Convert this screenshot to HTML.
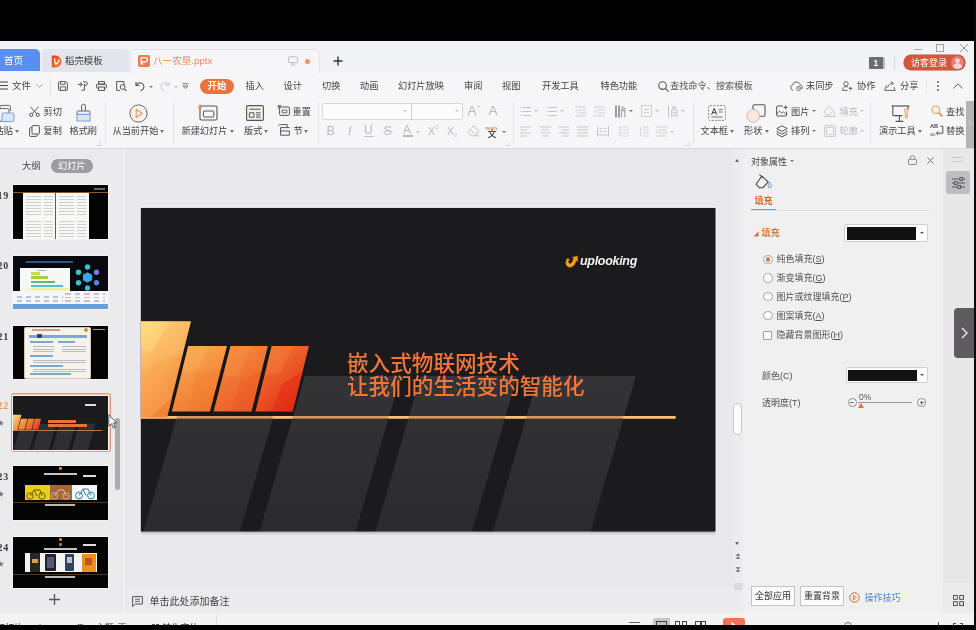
<!DOCTYPE html>
<html lang="zh-CN">
<head>
<meta charset="utf-8">
<title>WPS 演示</title>
<style>
*{box-sizing:border-box;margin:0;padding:0}
html,body{width:976px;height:630px;overflow:hidden;background:#000}
body{position:relative;font-family:"Liberation Sans","Noto Sans CJK SC",sans-serif;font-size:9.2px;color:#444}
.a{position:absolute}
.t{position:absolute;white-space:nowrap;line-height:12px;height:12px;filter:blur(.35px)}
.g{color:#b9b9bd}
svg{position:absolute;overflow:visible;filter:blur(.3px)}
.ar{position:absolute;width:0;height:0;border-left:2.5px solid transparent;border-right:2.5px solid transparent;border-top:3px solid #777}
.ar.g{border-top-color:#c4c4c8}
.sep{position:absolute;width:1px;background:#e2e2e6}
.num{font-family:"Liberation Serif","DejaVu Serif",serif;font-weight:bold;font-size:10px;color:#3a3a3a;letter-spacing:.8px}
.star{font-family:"DejaVu Sans",sans-serif;font-size:8.5px;color:#777}
.th{left:13px;width:95.300px;background:#040404;overflow:hidden;box-shadow:0 0 0 1px #f4f4f6}
.th svg{filter:none}
.lines{background:repeating-linear-gradient(0deg,#cfcfcb 0 .9px,transparent .9px 3.100px);-webkit-mask:linear-gradient(90deg,#000 0 55%,transparent 55% 66%,#000 66% 100%)}
.rad{width:9.5px;height:9.5px;border:1px solid #a4a4a8;border-radius:50%;background:#fcfcfc}
.rad i{position:absolute;left:1.500px;top:1.500px;width:4.500px;height:4.500px;border-radius:50%;background:#c4805c}
.opt{font-size:9px;color:#505050}
#tabbar{left:0;top:41px;width:976px;height:30.500px;background:#f2f3f7}
#menurow{left:0;top:71.500px;width:976px;height:25.500px;background:#f6f6f8}
#ribbon{left:0;top:97px;width:976px;height:51px;background:#f6f6f8}
#ribline{left:0;top:148px;width:976px;height:1px;background:#d9d9dd}
#left{left:0;top:149px;width:124.300px;height:464px;background:#ebebed}
#leftline{left:122.500px;top:149px;width:2.800px;height:464px;background:linear-gradient(90deg,#f1f1f3 0 1.600px,#dcdcdf 1.800px 2.800px)}
#center{left:125.300px;top:149px;width:620px;height:440px;background:#e9e9eb}
#right{left:743.300px;top:149px;width:199.700px;height:464px;background:#f0f0f1}
#strip{left:943px;top:149px;width:33px;height:464px;background:#e8e8e9}
#notes{left:125.300px;top:589px;width:618px;height:24px;background:#ebebed;border-top:1px solid #f1f1f3}
#status{left:0;top:613px;width:976px;height:12px;background:#f3f3f4;overflow:hidden}
</style>
</head>
<body>
<!-- BASE -->
<div class="a" id="tabbar"></div>
<div class="a" id="menurow"></div>
<div class="a" id="ribbon"></div>
<div class="a" id="ribline"></div>
<div class="a" id="left"></div>
<div class="a" id="leftline"></div>
<div class="a" id="center"></div>
<div class="a" id="right"></div>
<div class="a" id="strip"></div>
<div class="a" id="notes"></div>
<div class="a" id="status"></div>
<!-- TABS -->
<div class="a" style="left:0;top:49px;width:39.500px;height:22px;background:#598ff0;border-radius:0 5px 0 0"></div>
<div class="t" style="left:4px;top:55px;color:#fff;font-size:9.6px">首页</div>
<div class="a" style="left:42px;top:49px;width:87px;height:22.500px;background:#e2e5ec;border-radius:4px 4px 0 0"></div>
<svg style="left:51px;top:54.500px" width="11" height="13" viewBox="0 0 11 13"><defs><linearGradient id="gDk" x1="0" y1="0" x2="1" y2="1"><stop offset="0" stop-color="#e23c22"/><stop offset="1" stop-color="#f08a3c"/></linearGradient></defs><path d="M.8 .6h3.800a5.900 5.900 0 0 1 0 11.800H.8z" fill="url(#gDk)"/><path d="M3.600 3.600c-.2 2.200.2 4 1.200 5.600 1.600-.8 2.800-2.400 3.200-4.400" fill="none" stroke="#fff" stroke-width="1.300" stroke-linecap="round"/></svg>
<div class="t" style="left:65px;top:55px;color:#3c3c3c;font-size:9.4px">稻壳模板</div>
<div class="a" style="left:130px;top:49px;width:190px;height:24px;background:#f6f6f8;border-radius:5px 5px 0 0;border:1px solid #e2e3e8;border-bottom:none"></div>
<div class="a" style="left:138px;top:55px;width:12px;height:12px;background:#ee7a4e;border-radius:2px"></div>
<svg style="left:138px;top:55px" width="12" height="12" viewBox="0 0 12 12"><path d="M3.2 2.6h4.2a2 2 0 0 1 0 4.2H4.4v2.6M3.2 2.6v6.8" fill="none" stroke="#fff" stroke-width="1.3"/></svg>
<div class="t" style="left:153px;top:55px;color:#ee875e;font-size:9.6px">八一农垦.pptx</div>
<svg style="left:288px;top:56px" width="10" height="10" viewBox="0 0 10 10"><rect x=".6" y=".8" width="8.8" height="5.8" rx=".8" fill="none" stroke="#b8bcc4" stroke-width="1"/><path d="M5 6.6v2M2.8 9h4.4" stroke="#b8bcc4" stroke-width="1" fill="none"/></svg>
<div class="a" style="left:305px;top:59px;width:5px;height:5px;border-radius:50%;background:#f08f62"></div>
<svg style="left:333px;top:56px" width="10" height="10" viewBox="0 0 10 10"><path d="M5 .5v9M.5 5h9" stroke="#333" stroke-width="1.4"/></svg>
<!-- window controls -->
<div class="a" style="left:914px;top:49px;width:8px;height:1px;background:#aaa"></div>
<div class="a" style="left:936px;top:44px;width:8px;height:8px;border:1px solid #a2a2a6"></div>
<svg style="left:960px;top:44px" width="8" height="8" viewBox="0 0 8 8"><path d="M0 0l8 8M8 0l-8 8" stroke="#9a9a9e" stroke-width="1"/></svg>
<div class="a" style="left:869px;top:57px;width:14px;height:12px;background:#6c6c6e;border-radius:1px;box-shadow:2px 0 0 #bdbdc0"></div>
<div class="t" style="left:873.5px;top:57px;color:#fff;font-size:8.5px;font-weight:bold">1</div>
<div class="a" style="left:894px;top:56px;width:1px;height:14px;background:#d8d9de"></div>
<div class="a" style="left:904px;top:55px;width:61px;height:15px;background:#d5553f;border-radius:8px;box-shadow:0 0 0 .6px #b84a38"></div>
<div class="t" style="left:911px;top:56.5px;color:#fff;font-size:9px">访客登录</div>
<svg style="left:951px;top:56px" width="13" height="13" viewBox="0 0 13 13"><circle cx="6.5" cy="6.5" r="6.5" fill="#dd8278"/><circle cx="6.5" cy="4.8" r="2.4" fill="#f6d7d3"/><path d="M1.8 11c.6-3 2.6-3.8 4.7-3.8s4.1.8 4.7 3.8a6.5 6.5 0 0 1-9.4 0z" fill="#f6d7d3"/></svg>
<!-- MENU -->
<svg style="left:-1px;top:80.800px" width="9" height="9" viewBox="0 0 9 9"><path d="M0 1h9M0 4.5h9M0 8h9" stroke="#444" stroke-width="1.1"/></svg>
<div class="t" style="left:12px;top:79.800px;font-size:9.4px">文件</div>
<svg style="left:36px;top:83.800px" width="7" height="4" viewBox="0 0 7 4"><path d="M.5 .5l3 3 3-3" fill="none" stroke="#999" stroke-width=".9"/></svg>
<div class="sep" style="left:50px;top:77.800px;height:18px"></div>
<!-- quick icons -->
<svg style="left:58px;top:80.800px" width="10" height="10" viewBox="0 0 10 10"><path d="M.6 1.6a1 1 0 0 1 1-1h6.2l1.6 1.6v6.2a1 1 0 0 1-1 1H1.6a1 1 0 0 1-1-1z" fill="none" stroke="#555" stroke-width="1"/><path d="M2.6 .8v2.6h4.4V.8M2.4 9.2V5.8h5.2v3.4" fill="none" stroke="#555" stroke-width=".9"/></svg>
<svg style="left:77px;top:80.800px" width="11" height="10" viewBox="0 0 11 10"><path d="M1 3.4h4.2M3 1.2l2.4 2.2L3 5.6" fill="none" stroke="#555" stroke-width="1"/><path d="M6 .8h2.6a1.8 1.8 0 0 1 0 3.6H7.4M7.4 2.6v6.6M7.4 9.2H4.4" fill="none" stroke="#555" stroke-width="1"/></svg>
<svg style="left:96px;top:80.800px" width="11" height="10" viewBox="0 0 11 10"><rect x="2.6" y=".6" width="5.8" height="2.6" fill="none" stroke="#555" stroke-width="1"/><rect x=".6" y="3.2" width="9.8" height="4" rx=".8" fill="none" stroke="#555" stroke-width="1"/><rect x="2.6" y="6" width="5.8" height="3.4" fill="#f6f6f8" stroke="#555" stroke-width="1"/></svg>
<svg style="left:116px;top:80.800px" width="11" height="10" viewBox="0 0 11 10"><path d="M8 4V.6H.6v8.8H4" fill="none" stroke="#555" stroke-width="1"/><circle cx="6.6" cy="6" r="2.4" fill="none" stroke="#555" stroke-width="1"/><path d="M8.4 7.8l2 2" stroke="#555" stroke-width="1.1"/></svg>
<svg style="left:135px;top:80.800px" width="10" height="10" viewBox="0 0 10 10"><path d="M1 1v3.4h3.4" fill="none" stroke="#555" stroke-width="1.1"/><path d="M1.2 4.2C2.4 2 5 1.2 7 2.4s2.6 3.8 1 5.8c-.6.7-1.5 1.2-2.4 1.4" fill="none" stroke="#555" stroke-width="1.1"/></svg>
<div class="ar" style="left:148.5px;top:85.800px;border-left-width:2px;border-right-width:2px;border-top-width:2.5px"></div>
<svg style="left:160px;top:80.800px" width="10" height="10" viewBox="0 0 10 10"><path d="M9 1v3.4H5.6" fill="none" stroke="#d0d0d4" stroke-width="1.1"/><path d="M8.8 4.2C7.6 2 5 1.2 3 2.4S.4 6.200 2 8.2c.6.7 1.5 1.2 2.4 1.4" fill="none" stroke="#d0d0d4" stroke-width="1.1"/></svg>
<div class="ar g" style="left:173.5px;top:85.800px;border-left-width:2px;border-right-width:2px;border-top-width:2.5px"></div>
<svg style="left:182px;top:82.800px" width="7" height="7" viewBox="0 0 7 7"><path d="M.5 .8h6M1 3l2.5 2.6L6 3z" fill="none" stroke="#666" stroke-width=".9"/></svg>
<!-- tabs -->
<div class="a" style="left:200px;top:78.700px;width:34px;height:15px;background:#e9733f;border-radius:8px"></div>
<div class="t" style="left:207.5px;top:80.200px;color:#fff;font-weight:bold;font-size:9.4px">开始</div>
<div class="t" style="left:245.5px;top:80.200px">插入</div>
<div class="t" style="left:283.5px;top:80.200px">设计</div>
<div class="t" style="left:322px;top:80.200px">切换</div>
<div class="t" style="left:360px;top:80.200px">动画</div>
<div class="t" style="left:398px;top:80.200px">幻灯片放映</div>
<div class="t" style="left:464px;top:80.200px">审阅</div>
<div class="t" style="left:502px;top:80.200px">视图</div>
<div class="t" style="left:542px;top:80.200px">开发工具</div>
<div class="t" style="left:600.5px;top:80.200px">特色功能</div>
<svg style="left:658px;top:80.700px" width="11" height="11" viewBox="0 0 11 11"><circle cx="4.6" cy="4.6" r="3.8" fill="none" stroke="#555" stroke-width="1.1"/><path d="M7.4 7.4l3.2 3.2" stroke="#555" stroke-width="1.2"/></svg>
<div class="t" style="left:670px;top:80.200px;color:#555">查找命令、搜索模板</div>
<svg style="left:790px;top:80.700px" width="13" height="10" viewBox="0 0 13 10"><path d="M3.2 9.2H3a2.6 2.6 0 0 1-.4-5.100A3.800 3.800 0 0 1 10 3.600a2.800 2.800 0 0 1 1.600 4.600" fill="none" stroke="#666" stroke-width="1"/><circle cx="8.6" cy="7.4" r="2.1" fill="none" stroke="#666" stroke-width=".9"/><path d="M8.600 6.200v1.400h1" fill="none" stroke="#666" stroke-width=".8"/></svg>
<div class="t" style="left:806px;top:80.200px">未同步</div>
<svg style="left:842px;top:80.700px" width="11" height="10" viewBox="0 0 11 10"><circle cx="4" cy="2.800" r="2.200" fill="none" stroke="#666" stroke-width="1"/><path d="M.6 9.400c0-2.600 1.400-3.800 3.400-3.800 1 0 1.800.3 2.400.9M.6 9.400h5" fill="none" stroke="#666" stroke-width="1"/><path d="M8.600 5.600v3.600M6.800 7.400h3.600" stroke="#666" stroke-width="1"/></svg>
<div class="t" style="left:857px;top:80.200px">协作</div>
<svg style="left:884px;top:80.700px" width="12" height="10" viewBox="0 0 12 10"><path d="M2.400 4.400L.8 9.400h10.400l-1.400-3.400" fill="none" stroke="#666" stroke-width="1"/><path d="M3.600 6.800c.4-2.800 2.400-4.400 5-4.600M7 .4l2.400 1.800L7.400 4.400" fill="none" stroke="#666" stroke-width="1"/></svg>
<div class="t" style="left:900px;top:80.200px">分享</div>
<div class="sep" style="left:926px;top:78.700px;height:15px;background:#e6e6ea"></div>
<div class="a" style="left:937px;top:80.700px;width:2px;height:2px;background:#666;border-radius:50%;box-shadow:0 4px 0 #666,0 8px 0 #666"></div>
<svg style="left:953px;top:82.700px" width="10" height="6" viewBox="0 0 10 6"><path d="M.5 5.500L5 .8l4.500 4.700" fill="none" stroke="#666" stroke-width="1"/></svg>
<!-- RIBBON -->
<!-- paste -->
<svg style="left:-3px;top:104px" width="18" height="19" viewBox="0 0 18 19"><path d="M3 4.600V2.400a1 1 0 0 1 1-1h8.400a1 1 0 0 1 1 1V7" fill="none" stroke="#666" stroke-width="1"/><rect x="1" y="4.600" width="11" height="12.600" rx="1.200" fill="#f6f6f8" stroke="#666" stroke-width="1"/><rect x="5" y="9" width="12" height="8.600" rx="1.200" fill="#d9e6f7" stroke="#7aa2d8" stroke-width="1"/></svg>
<div class="t" style="left:-5.500px;top:125px">粘贴</div>
<div class="ar" style="left:15px;top:130px"></div>
<!-- cut / copy -->
<svg style="left:29px;top:106px" width="11" height="11" viewBox="0 0 11 11"><path d="M1.400 .8l6.400 7M9.600 .8L3.200 7.800" stroke="#555" stroke-width="1"/><circle cx="2.200" cy="8.800" r="1.600" fill="none" stroke="#555" stroke-width="1"/><circle cx="8.800" cy="8.800" r="1.600" fill="none" stroke="#555" stroke-width="1"/></svg>
<div class="t" style="left:43.500px;top:105.500px">剪切</div>
<svg style="left:29px;top:125px" width="11" height="12" viewBox="0 0 11 12"><rect x="3" y=".6" width="7.400" height="8.400" rx=".8" fill="none" stroke="#555" stroke-width="1"/><path d="M3 2.800H1.400a.8.800 0 0 0-.8.800v7a.8.800 0 0 0 .8.800h5.800a.8.800 0 0 0 .8-.8V9" fill="none" stroke="#555" stroke-width="1"/></svg>
<div class="t" style="left:43.500px;top:125px">复制</div>
<!-- format painter -->
<svg style="left:76px;top:104px" width="15" height="18" viewBox="0 0 15 18"><path d="M5.600 7V2a1.900 1.900 0 0 1 3.800 0v5" fill="#f6f6f8" stroke="#666" stroke-width="1"/><path d="M1 10.400V8a1 1 0 0 1 1-1h11a1 1 0 0 1 1 1v2.400z" fill="#f6f6f8" stroke="#666" stroke-width="1"/><rect x="1" y="10.400" width="13" height="6.600" fill="#d8e6f7" stroke="#7aa2d8" stroke-width="1"/></svg>
<div class="t" style="left:69.500px;top:125px">格式刷</div>
<svg style="left:96px;top:141px" width="5" height="5" viewBox="0 0 5 5"><path d="M4.500 .5v4h-4" fill="none" stroke="#d0d0d4" stroke-width=".9"/></svg>
<div class="sep" style="left:105px;top:102px;height:42px"></div>
<!-- play from current -->
<svg style="left:129px;top:104px" width="19" height="19" viewBox="0 0 19 19"><circle cx="9.500" cy="9.500" r="8.600" fill="#faf3ec" stroke="#666" stroke-width="1"/><path d="M7.200 5.400l6 4.100-6 4.100z" fill="none" stroke="#e39a55" stroke-width="1.100" stroke-linejoin="round"/></svg>
<div class="t" style="left:112.500px;top:125px">从当前开始</div>
<div class="ar" style="left:160px;top:130px"></div>
<div class="sep" style="left:173px;top:102px;height:42px"></div>
<!-- new slide -->
<svg style="left:197px;top:104px" width="21" height="17" viewBox="0 0 21 17"><rect x="3" y="2" width="17" height="14" rx="1.500" fill="none" stroke="#555" stroke-width="1.100"/><rect x="6.400" y="7" width="10.400" height="6" rx=".6" fill="none" stroke="#555" stroke-width="1"/><path d="M3 .2v5M.6 2.800h5M1.200 1l3.600 3.600M4.800 1L1.200 4.600" stroke="#c98a5a" stroke-width=".7"/></svg>
<div class="t" style="left:181.500px;top:125px">新建幻灯片</div>
<div class="ar" style="left:229.500px;top:130px"></div>
<!-- layout -->
<svg style="left:246px;top:105px" width="18" height="16" viewBox="0 0 18 16"><rect x=".6" y=".6" width="16.800" height="14.800" rx="1.200" fill="#f8efe6" stroke="#555" stroke-width="1.100"/><path d="M3.400 4.200h11.200M3.400 7.800h4.600v4.400H3.400zM10 7.800h4.600M10 10h4.600M10 12.200h4.600" fill="none" stroke="#555" stroke-width="1"/></svg>
<div class="t" style="left:244px;top:125px">版式</div>
<div class="ar" style="left:264px;top:130px"></div>
<!-- reset / section -->
<svg style="left:277.500px;top:105px" width="12" height="11" viewBox="0 0 12 11"><rect x="1.600" y="2" width="9.800" height="8.400" rx="1" fill="none" stroke="#555" stroke-width="1"/><path d="M4.200 5h4.600v2.800H4.200z" fill="none" stroke="#555" stroke-width=".9"/><path d="M.4 3.600V.6h3" fill="none" stroke="#555" stroke-width=".9"/><path d="M.4 .6L2.600 2.800" stroke="#555" stroke-width=".9"/></svg>
<div class="t" style="left:292.500px;top:105.500px">重置</div>
<svg style="left:277.500px;top:124px" width="12" height="12" viewBox="0 0 12 12"><path d="M2.600 3.600h8.800M2.600 3.600v7.600h8.800V7M2.600 7h8.800" fill="none" stroke="#555" stroke-width="1"/><path d="M2.200 .6h7v3" fill="none" stroke="#555" stroke-width="1"/><path d="M.2 .2l2 2M2.200 .2l-2 2" stroke="#d46a4a" stroke-width=".7"/></svg>
<div class="t" style="left:293.500px;top:125px">节</div>
<div class="ar" style="left:304px;top:130px"></div>
<div class="sep" style="left:318px;top:102px;height:42px"></div>
<!-- font boxes -->
<div class="a" style="left:322px;top:102.500px;width:141px;height:17px;background:#fcfcfd;border:1px solid #d8d8dc;border-radius:2px"></div>
<div class="a" style="left:410.500px;top:102.500px;width:1px;height:17px;background:#d0d0d4"></div>
<div class="ar g" style="left:403px;top:110px;border-left-width:2px;border-right-width:2px;border-top-width:2.500px"></div>
<div class="ar g" style="left:455px;top:110px;border-left-width:2px;border-right-width:2px;border-top-width:2.500px"></div>
<div class="t g" style="left:467.500px;top:103.500px;font-size:13.500px;line-height:14px;height:14px">A</div>
<div class="t g" style="left:477px;top:103px;font-size:5px;line-height:6px;height:6px">+</div>
<div class="t g" style="left:488.500px;top:103.500px;font-size:13.500px;line-height:14px;height:14px">A</div>
<div class="t g" style="left:497.500px;top:102px;font-size:6px;line-height:6px;height:6px">-</div>
<!-- B I U S A x2 x2 eraser -->
<div class="t g" style="left:326.500px;top:123.500px;font-size:12.500px;line-height:14px;height:14px">B</div>
<div class="t g" style="left:348px;top:123.500px;font-size:12.500px;line-height:14px;height:14px;font-style:italic">I</div>
<div class="t g" style="left:364px;top:123px;font-size:12px;line-height:14px;height:14px">U</div>
<div class="a" style="left:364px;top:135.500px;width:9.500px;height:1px;background:#c4c4c8"></div>
<div class="t g" style="left:383.500px;top:123.500px;font-size:12.500px;line-height:14px;height:14px">S</div>
<div class="a" style="left:383px;top:130.500px;width:9.500px;height:.8px;background:#d4d4d8"></div>
<div class="t g" style="left:403px;top:123px;font-size:12px;line-height:14px;height:14px">A</div>
<div class="a" style="left:402.500px;top:135px;width:10px;height:1.500px;background:#b8b8bc"></div>
<div class="ar g" style="left:416px;top:131px;border-left-width:2px;border-right-width:2px;border-top-width:2.500px"></div>
<div class="t g" style="left:428px;top:125px;font-size:10.500px;line-height:13px;height:13px">X</div>
<div class="t g" style="left:435.500px;top:124px;font-size:5px;line-height:6px;height:6px">2</div>
<div class="t g" style="left:447px;top:125px;font-size:10.500px;line-height:13px;height:13px">X</div>
<div class="t g" style="left:454.500px;top:132px;font-size:5px;line-height:6px;height:6px">2</div>
<svg style="left:467px;top:125px" width="13" height="12" viewBox="0 0 13 12"><path d="M6.200 .8l5.800 5.400-4.400 4.600H4.200L.8 7.400z" fill="none" stroke="#c4c4c8" stroke-width="1"/><path d="M3.200 4.600l5 4.800M7.600 10.800H12" stroke="#c4c4c8" stroke-width="1"/></svg>
<div class="t" style="left:487.500px;top:127.500px;font-size:9px;color:#333;font-weight:500">文</div>
<div class="t" style="left:485.500px;top:124.500px;font-size:5.500px;line-height:6px;height:6px;color:#d8904a;letter-spacing:.4px;font-weight:bold">wén</div>
<div class="ar" style="left:501.500px;top:131px;border-left-width:2px;border-right-width:2px;border-top-width:2.500px"></div>
<svg style="left:505px;top:141px" width="5" height="5" viewBox="0 0 5 5"><path d="M4.500 .5v4h-4" fill="none" stroke="#d6d6da" stroke-width=".9"/></svg>
<div class="sep" style="left:513px;top:102px;height:42px"></div>
<!-- paragraph icons row 1 -->
<svg style="left:520px;top:106px" width="11" height="11" viewBox="0 0 11 11"><path d="M.4 1.500h1.200M3 1.500h8M.4 5.500h1.200M3 5.500h8M.4 9.500h1.200M3 9.500h8" stroke="#c4c4c8" stroke-width="1"/></svg>
<div class="ar g" style="left:534px;top:110px;border-left-width:2px;border-right-width:2px;border-top-width:2.500px"></div>
<svg style="left:546px;top:106px" width="11" height="11" viewBox="0 0 11 11"><path d="M.4 1.500h1.200M3 1.500h8M.4 5.500h1.200M3 5.500h8M.4 9.500h1.200M3 9.500h8" stroke="#c4c4c8" stroke-width="1"/></svg>
<div class="ar g" style="left:560px;top:110px;border-left-width:2px;border-right-width:2px;border-top-width:2.500px"></div>
<svg style="left:574.500px;top:106px" width="11" height="11" viewBox="0 0 11 11"><path d="M0 1h11M4 4h7M4 7h7M0 10h11M2.600 4L.4 5.500l2.200 1.500" fill="none" stroke="#d0d0d4" stroke-width="1"/></svg>
<svg style="left:593.500px;top:106px" width="11" height="11" viewBox="0 0 11 11"><path d="M0 1h11M4 4h7M4 7h7M0 10h11M.4 4l2.200 1.500L.4 7" fill="none" stroke="#d0d0d4" stroke-width="1"/></svg>
<svg style="left:615px;top:104.500px" width="11" height="13" viewBox="0 0 11 13"><path d="M1 .5v12M4 .5v12" stroke="#555" stroke-width="1.100"/><path d="M6.600 12.500V5.600M9.800 12.500V5.600M6.200 5.600h4M8.200 1.600l2 2.600h-4z" fill="none" stroke="#a09080" stroke-width=".9"/></svg>
<div class="ar" style="left:629px;top:110px;border-left-width:2px;border-right-width:2px;border-top-width:2.500px"></div>
<svg style="left:640.500px;top:105px" width="11" height="12" viewBox="0 0 11 12"><rect x=".5" y=".5" width="10" height="11" fill="none" stroke="#d0d0d4" stroke-width="1"/><path d="M3 4.500h5M3 7.500h5" stroke="#d0d0d4" stroke-width="1"/></svg>
<div class="ar g" style="left:655px;top:110px;border-left-width:2px;border-right-width:2px;border-top-width:2.500px"></div>
<svg style="left:667px;top:104.500px" width="11" height="13" viewBox="0 0 11 13"><path d="M1.500 .5v12" stroke="#c4c4c8" stroke-width="1"/><path d="M4.600 12.500V5M9.800 12.500V5M4.600 5h5.200M4.600 8h5.200M4.600 10.500h5.200M7.200 .8l2 2.600h-4z" fill="none" stroke="#c4c4c8" stroke-width=".9"/></svg>
<div class="ar g" style="left:681px;top:110px;border-left-width:2px;border-right-width:2px;border-top-width:2.500px"></div>
<!-- paragraph icons row 2 -->
<svg style="left:520px;top:126px" width="11" height="11" viewBox="0 0 11 11"><path d="M0 1h11M0 4h7M0 7h11M0 10h7" stroke="#c8c8cc" stroke-width="1"/></svg>
<svg style="left:540px;top:126px" width="11" height="11" viewBox="0 0 11 11"><path d="M0 1h11M2 4h7M0 7h11M2 10h7" stroke="#c8c8cc" stroke-width="1"/></svg>
<svg style="left:558px;top:126px" width="11" height="11" viewBox="0 0 11 11"><path d="M0 1h11M4 4h7M0 7h11M4 10h7" stroke="#c8c8cc" stroke-width="1"/></svg>
<svg style="left:577px;top:126px" width="11" height="11" viewBox="0 0 11 11"><path d="M0 1h11M0 4h11M0 7h11M0 10h11" stroke="#c8c8cc" stroke-width="1"/></svg>
<svg style="left:596.500px;top:126px" width="12" height="11" viewBox="0 0 12 11"><path d="M.5 0v11M11.500 0v11M2.600 2.500h2.800M6.600 2.500h2.800M2.600 5.500h2.800M6.600 5.500h2.800M.5 9h11" stroke="#c8c8cc" stroke-width="1"/></svg>
<svg style="left:618px;top:126px" width="11" height="11" viewBox="0 0 11 11"><path d="M4.500 1H11M4.500 4H11M4.500 7H11M4.500 10H11M2 .4v10M.4 2.200L2 .4l1.600 1.800M.4 8.800L2 10.600l1.600-1.800" fill="none" stroke="#d4d4d8" stroke-width=".9"/></svg>
<svg style="left:638.500px;top:126px" width="10" height="11" viewBox="0 0 10 11"><path d="M4 1h6M4 4h6M4 7h6M4 10h6M1.500 .4v10" fill="none" stroke="#d4d4d8" stroke-width=".9"/></svg>
<svg style="left:656px;top:126px" width="11" height="11" viewBox="0 0 11 11"><path d="M0 1h11M3 4h8M3 7h8M0 10h11M1 3.500v4" fill="none" stroke="#d0d0d4" stroke-width="1"/></svg>
<div class="ar g" style="left:670px;top:131px;border-left-width:2px;border-right-width:2px;border-top-width:2.500px"></div>
<svg style="left:685px;top:141px" width="5" height="5" viewBox="0 0 5 5"><path d="M4.500 .5v4h-4" fill="none" stroke="#d6d6da" stroke-width=".9"/></svg>
<div class="sep" style="left:693px;top:102px;height:42px"></div>
<!-- textbox -->
<svg style="left:708px;top:105px" width="18" height="16" viewBox="0 0 18 16"><rect x=".6" y=".6" width="16.800" height="14.800" rx="1" fill="none" stroke="#8e8e92" stroke-width="1" stroke-dasharray="2.200 1.200"/><path d="M3.600 9.800L6.200 3.400l2.600 6.400M4.500 7.600h3.400" fill="none" stroke="#444" stroke-width="1"/><path d="M10.600 4.600h4M10.600 7h4M3.600 12h11" stroke="#666" stroke-width=".9"/></svg>
<div class="t" style="left:700.500px;top:125px">文本框</div>
<div class="ar" style="left:730px;top:130px"></div>
<!-- shapes -->
<svg style="left:746px;top:104px" width="20" height="19" viewBox="0 0 20 19"><rect x="7" y=".8" width="12" height="11.400" rx="1.200" fill="#f6f6f8" stroke="#555" stroke-width="1.100"/><circle cx="7.200" cy="11.800" r="6.400" fill="#f8e8e0" stroke="#d8b4a4" stroke-width="1"/></svg>
<div class="t" style="left:744px;top:125px">形状</div>
<div class="ar" style="left:764.500px;top:130px"></div>
<!-- picture / arrange -->
<svg style="left:776px;top:105px" width="12" height="12" viewBox="0 0 12 12"><path d="M7 1H1.400a.8.800 0 0 0-.8.800v8.400a.8.800 0 0 0 .8.800h8.400a.8.800 0 0 0 .8-.8V6.500" fill="none" stroke="#555" stroke-width="1"/><path d="M1 9l2.600-3 2.200 2.200 1.600-1.400L10 9.400" fill="none" stroke="#555" stroke-width=".9"/><path d="M9.600 .4v4M7.600 2.400h4" stroke="#555" stroke-width="1"/></svg>
<div class="t" style="left:791px;top:105.500px">图片</div>
<div class="ar" style="left:812px;top:110px;border-left-width:2px;border-right-width:2px;border-top-width:2.500px"></div>
<svg style="left:776px;top:125px" width="12" height="12" viewBox="0 0 12 12"><path d="M6 .8l5.200 2.800L6 6.400.8 3.600z" fill="none" stroke="#555" stroke-width="1"/><path d="M1.600 6L.8 6.400 6 9.200l5.200-2.800-.8-.4M1.600 8.600l-.8.400L6 11.800l5.200-2.800-.8-.4" fill="none" stroke="#555" stroke-width="1"/></svg>
<div class="t" style="left:791px;top:125px">排列</div>
<div class="ar" style="left:812px;top:130px;border-left-width:2px;border-right-width:2px;border-top-width:2.500px"></div>
<!-- fill / outline disabled -->
<svg style="left:823px;top:105px" width="13" height="12" viewBox="0 0 13 12"><path d="M5.600 1.200l5 4.400-4.600 4.200H3.600L1 7.200z" fill="none" stroke="#c8c8cc" stroke-width="1"/><path d="M.6 11.400h12" stroke="#c8c8cc" stroke-width="1.200"/><path d="M11.600 6.400c.6.900.9 1.500.9 2a.9.900 0 0 1-1.800 0c0-.5.300-1.100.9-2z" fill="#c8c8cc"/></svg>
<div class="t g" style="left:839.500px;top:105.500px">填充</div>
<div class="ar g" style="left:860px;top:110px;border-left-width:2px;border-right-width:2px;border-top-width:2.500px"></div>
<svg style="left:823.500px;top:125px" width="12" height="12" viewBox="0 0 12 12"><rect x=".6" y=".6" width="10.800" height="10.800" rx=".8" fill="none" stroke="#c8c8cc" stroke-width="1"/><rect x="2.600" y="2.600" width="6.800" height="6.800" fill="none" stroke="#c8c8cc" stroke-width=".8"/></svg>
<div class="t g" style="left:839.500px;top:125px">轮廓</div>
<div class="ar g" style="left:860px;top:130px;border-left-width:2px;border-right-width:2px;border-top-width:2.500px"></div>
<div class="sep" style="left:870px;top:102px;height:42px"></div>
<!-- presentation tools -->
<svg style="left:891px;top:105px" width="19" height="18" viewBox="0 0 19 18"><path d="M.6 1h17.800" stroke="#555" stroke-width="1.200"/><path d="M1.800 1v8.600a1 1 0 0 0 1 1h8.600" fill="none" stroke="#555" stroke-width="1.100"/><path d="M17.200 1v3" stroke="#555" stroke-width="1.100"/><path d="M8.400 10.600V16M4.600 16.400h7.600" stroke="#555" stroke-width="1.100"/><path d="M13.400 5.600a1.900 1.900 0 0 1 3.800 0c0 1-.6 1.500-.9 2v4.600a1 1 0 0 1-2 0V7.600c-.3-.5-.9-1-.9-2z" fill="#f6e0c8" stroke="#d89a5e" stroke-width=".9"/></svg>
<div class="t" style="left:879px;top:125px">演示工具</div>
<div class="ar" style="left:918px;top:130px"></div>
<!-- find / replace -->
<svg style="left:931px;top:105px" width="12" height="12" viewBox="0 0 12 12"><circle cx="4.800" cy="4.800" r="4" fill="#fbf1e2" stroke="#e2a05e" stroke-width="1"/><path d="M7.800 7.800l3.600 3.600" stroke="#c98a50" stroke-width="1.600"/></svg>
<div class="t" style="left:946px;top:105.500px">查找</div>
<svg style="left:930.500px;top:124px" width="13" height="13" viewBox="0 0 13 13"><path d="M9.400 2.200h2.400v7H5.600M7.400 7.200L5.400 9.200l2 2" fill="none" stroke="#555" stroke-width="1"/></svg>
<div class="t" style="left:930px;top:123px;font-size:5.500px;line-height:7px;height:7px;font-weight:bold;color:#444">AB</div>
<div class="t" style="left:930px;top:130.500px;font-size:5.500px;line-height:7px;height:7px;color:#666">ac</div>
<div class="t" style="left:946px;top:125px">替换</div>
<!-- ribbon scroll -->
<div class="a" style="left:965.500px;top:100.500px;width:8.500px;height:47px;background:#b4b4b8"></div>
<svg style="left:968px;top:120px" width="4" height="7" viewBox="0 0 4 7"><path d="M.5 .5l3 3-3 3" fill="none" stroke="#d8d8dc" stroke-width=".9"/></svg>
<!-- LEFT -->
<div class="t" style="left:22px;top:159.500px;font-size:9.200px;color:#444">大纲</div>
<div class="a" style="left:50.500px;top:159px;width:42px;height:14px;background:#9d9d9f;border-radius:7px"></div>
<div class="t" style="left:58px;top:160px;font-size:9.200px;color:#fff">幻灯片</div>
<!-- numbers -->
<div class="t num" style="left:-2.500px;top:190px">19</div>
<div class="t num" style="left:-2.500px;top:260px">20</div>
<div class="t num" style="left:-2.500px;top:330.500px">21</div>
<div class="t num" style="left:-2.500px;top:400px;color:#e8955a">22</div>
<div class="t num" style="left:-2.500px;top:470.500px">23</div>
<div class="t num" style="left:-2.500px;top:541.500px">24</div>
<div class="t star" style="left:-3px;top:417px">★</div>
<div class="t star" style="left:-3px;top:487.500px">★</div>
<div class="t star" style="left:-3px;top:557.500px">★</div>
<!-- thumb 19 -->
<div class="a th" style="top:185.300px;height:53.800px">
  <div class="a" style="left:0;top:6.700px;width:96px;height:.7px;background:#8a5a2a"></div>
  <div class="a" style="left:10.200px;top:7.400px;width:65.800px;height:46.400px;background:#f7f7f5"></div>
  <div class="a" style="left:42.300px;top:7.400px;width:1.100px;height:46.400px;background:#5e5a50"></div>
  <div class="a lines" style="left:12.500px;top:10px;width:27px;height:42px"></div>
  <div class="a lines" style="left:46px;top:10px;width:27px;height:42px"></div>
  <div class="a" style="left:81px;top:3px;width:11px;height:1.500px;background:#aaa;opacity:.6"></div>
</div>
<!-- thumb 20 -->
<div class="a th" style="top:255.500px;height:53.800px;background:#07090e">
  <div class="a" style="left:12.500px;top:5.300px;width:47px;height:2.600px;background:#3a6a98;opacity:.8"></div>
  <div class="a" style="left:7px;top:12.400px;width:50.400px;height:23px;background:linear-gradient(180deg,#f6f8f6 0 70%,#f4f4d8 100%)"></div>
  <div class="a" style="left:24px;top:14px;width:9px;height:1.200px;background:#b0b4b8"></div>
  <div class="a" style="left:17.700px;top:16.600px;width:9.700px;height:2.500px;background:#cbd94e"></div>
  <div class="a" style="left:17.700px;top:20.900px;width:17.200px;height:2.500px;background:#a9ca4a"></div>
  <div class="a" style="left:17.700px;top:25.200px;width:24.700px;height:2.500px;background:#6bb95a"></div>
  <div class="a" style="left:17.700px;top:29.100px;width:32.200px;height:2.500px;background:#4fc0d0"></div>
  <div class="a" style="left:17.700px;top:32.600px;width:38.600px;height:2.200px;background:#eeee9a"></div>
  <svg style="left:60px;top:7px" width="30" height="30" viewBox="0 0 30 30"><g><path d="M14.500 9.200l4.600 2.650v5.300l-4.600 2.650-4.600-2.650v-5.300z" fill="#3aa4e4"/><circle cx="14.500" cy="4" r="2.700" fill="#3cc0d8"/><circle cx="14.500" cy="25" r="2.700" fill="#3cb4d8"/><circle cx="5.500" cy="9.200" r="2.700" fill="#3cc8b8"/><circle cx="23.500" cy="9.200" r="2.700" fill="#7a78e0"/><circle cx="5.500" cy="19.800" r="2.700" fill="#3cc0c8"/><circle cx="23.500" cy="19.800" r="2.700" fill="#5a84e0"/></g></svg>
  <div class="a" style="left:0;top:35.200px;width:96px;height:13.500px;background:#f4f6f9"></div>
  <div class="a" style="left:4px;top:38px;width:46px;height:8px;background:repeating-linear-gradient(90deg,#8ea0b8 0 5px,transparent 5px 9px);opacity:.55;-webkit-mask:repeating-linear-gradient(0deg,#000 0 1.800px,transparent 1.800px 4.500px)"></div>
  <div class="a" style="left:52px;top:37px;width:40px;height:9.500px;background:repeating-linear-gradient(90deg,#c88a8a 0 6px,transparent 6px 10px,#8ea0b8 10px 15px,transparent 15px 19px);opacity:.55;-webkit-mask:repeating-linear-gradient(0deg,#000 0 1.600px,transparent 1.600px 3.600px)"></div>
  <div class="a" style="left:0;top:48.700px;width:96px;height:5.100px;background:#6aa0d8"></div>
</div>
<!-- thumb 21 -->
<div class="a th" style="top:325.700px;height:53.800px">
  <div class="a" style="left:11px;top:1px;width:67px;height:52px;background:#f6f3ec;border:1.200px solid #d8c6a8;border-radius:1.500px"></div>
  <div class="a" style="left:19px;top:3px;width:28px;height:2px;background:#c0605a;opacity:.6"></div>
  <div class="a" style="left:16px;top:9.500px;width:58px;height:3px;background:#7ba6d8"></div>
  <div class="a" style="left:17px;top:15.500px;width:23px;height:2px;background:#7ba6d8"></div>
  <div class="a" style="left:45px;top:15.500px;width:17px;height:2px;background:#7ba6d8"></div>
  <div class="a" style="left:20px;top:19px;width:21px;height:7px;background:repeating-linear-gradient(0deg,#b8bcc4 0 .8px,transparent .8px 2.400px)"></div>
  <div class="a" style="left:49px;top:19px;width:24px;height:7px;background:repeating-linear-gradient(0deg,#b8bcc4 0 .8px,transparent .8px 2.400px)"></div>
  <div class="a" style="left:17px;top:29px;width:23px;height:2px;background:#7ba6d8"></div>
  <div class="a" style="left:20px;top:32.500px;width:53px;height:5px;background:repeating-linear-gradient(0deg,#b8bcc4 0 .8px,transparent .8px 2.400px)"></div>
  <div class="a" style="left:17px;top:39.500px;width:33px;height:2px;background:#7ba6d8"></div>
  <div class="a" style="left:20px;top:43px;width:53px;height:3px;background:repeating-linear-gradient(0deg,#b8bcc4 0 .8px,transparent .8px 2.400px)"></div>
  <div class="a" style="left:17px;top:47.500px;width:41px;height:2.200px;background:#7ba6d8"></div>
  <div class="a" style="left:80px;top:3px;width:12px;height:1.500px;background:#ccc;opacity:.75"></div>
  <div class="a" style="left:24px;top:8px;width:5px;height:4px;background:#34465e;border-radius:1px"></div>
  <div class="a" style="left:71px;top:2.500px;width:4px;height:4px;border-radius:50%;background:#d88a4a"></div>
</div>
<!-- thumb 22 selected -->
<div class="a" style="left:10.500px;top:393px;width:100.500px;height:58.500px;border:1.200px solid #ea9676;border-radius:2.500px;background:#f4c6b2"></div>
<div class="a th" style="top:396px;height:53.500px;background:#1b1a1c">
  <svg style="left:0;top:0" width="96" height="53.500" viewBox="141 207.500 575 323.500" preserveAspectRatio="none">
    <rect x="141" y="207.500" width="575" height="324" fill="#1b1a1c"/>
    <g fill="#fff" fill-opacity=".09">
      <polygon points="177,417 273,417 239.500,534 143,534"/>
      <polygon points="305.100,375.700 401.100,375.700 355,534 259,534"/>
      <polygon points="421.100,375.700 517.600,375.700 471.500,534 375,534"/>
      <polygon points="538.600,375.700 636.100,375.700 590,534 492.500,534"/>
    </g>
    <rect x="141" y="414.500" width="534.800" height="4.500" fill="#d89a5c"/>
    <polygon points="141,321 191.300,321 167.400,417 141,417" fill="url(#gBig)"/>
    <polygon points="188.500,345.800 227.300,345.800 210.200,411.200 172.200,411.200" fill="url(#g1)"/>
    <polygon points="230.800,345.800 268.200,345.800 251.800,411.200 213.900,411.200" fill="url(#g2)"/>
    <polygon points="272,345.800 309.300,345.800 293,411.200 255.700,411.200" fill="url(#g3)"/>
  </svg>
  <div class="a" style="left:35px;top:24.300px;width:28px;height:3.200px;background:#e8703a"></div>
  <div class="a" style="left:35px;top:28.300px;width:39px;height:3.200px;background:#e8703a"></div>
  <div class="a" style="left:72px;top:8px;width:10.500px;height:1.800px;background:#ddd"></div>
</div>
<!-- thumb 23 -->
<div class="a th" style="top:466px;height:53.800px">
  <div class="a" style="left:45.500px;top:1px;width:3.500px;height:3px;background:#d8903a;border-radius:50%"></div>
  <div class="a" style="left:31px;top:7px;width:33px;height:2px;background:#c4c4c4"></div>
  <div class="a" style="left:70px;top:8.500px;width:12.500px;height:2px;background:#ddd"></div>
  <div class="a" style="left:12px;top:18.700px;width:24.500px;height:15.800px;background:#e9cf1c"></div>
  <div class="a" style="left:36.500px;top:18.700px;width:22.500px;height:15.800px;background:#a5683a"></div>
  <div class="a" style="left:59px;top:18.700px;width:25px;height:15.800px;background:#f4f6f8"></div>
  <svg style="left:12px;top:18.900px" width="72" height="15.500" viewBox="0 0 72 15.500"><g fill="none" stroke-width="1"><circle cx="5" cy="11" r="3.200" stroke="#6a5a10"/><circle cx="17" cy="11" r="3.200" stroke="#6a5a10"/><path d="M5 11l4-6h6l2 6M9 5l3 6" stroke="#6a5a10"/><circle cx="29.500" cy="11" r="3.200" stroke="#d8b090"/><circle cx="41" cy="11" r="3.200" stroke="#d8b090"/><path d="M29.500 11l4-6h5l2.500 6" stroke="#e0c0a0"/><circle cx="54" cy="10.500" r="3.400" stroke="#3a78b0"/><circle cx="66" cy="10.500" r="3.400" stroke="#3a78b0"/><path d="M54 10.500l4-6.500h5l3 6.500M58 4l3 6.500" stroke="#3a78b0"/></g></svg>
  <div class="a" style="left:0;top:36.300px;width:96px;height:.8px;background:#54361c"></div>
  <div class="a" style="left:32px;top:38.200px;width:30px;height:1.600px;background:#b8b8b8"></div>
</div>
<!-- thumb 24 -->
<div class="a th" style="top:536.600px;height:51.200px">
  <div class="a" style="left:45.500px;top:1px;width:3.500px;height:3px;background:#d8903a;border-radius:50%"></div>
  <div class="a" style="left:46px;top:6.500px;width:2.500px;height:2.500px;background:#888;border-radius:50%"></div>
  <div class="a" style="left:31px;top:11.500px;width:33px;height:2px;background:#c4c4c4"></div>
  <div class="a" style="left:70px;top:7.500px;width:12.500px;height:2px;background:#ddd"></div>
  <div class="a" style="left:12px;top:16.500px;width:71.500px;height:19px;background:#f4f4f2"></div>
  <div class="a" style="left:17px;top:16.500px;width:9.500px;height:19px;background:#2a2620"></div>
  <div class="a" style="left:19px;top:22px;width:5.500px;height:4px;background:#d8a040"></div>
  <div class="a" style="left:32px;top:17.500px;width:10.500px;height:17px;background:#23232b;border-radius:1px"></div>
  <div class="a" style="left:34px;top:20px;width:6.500px;height:11px;background:#56587a"></div>
  <div class="a" style="left:51.500px;top:17.500px;width:9.500px;height:17px;background:#30445e;border-radius:1px"></div>
  <div class="a" style="left:53.500px;top:20px;width:5.500px;height:6px;background:#b8c4d0"></div>
  <div class="a" style="left:68.500px;top:17.500px;width:14px;height:17.500px;background:#e9902a"></div>
  <div class="a" style="left:72px;top:21px;width:7px;height:7px;background:#c8501a"></div>
  <div class="a" style="left:0;top:37.500px;width:96px;height:.8px;background:#54361c"></div>
  <div class="a" style="left:32px;top:39.500px;width:30px;height:1.600px;background:#b8b8b8"></div>
</div>
<!-- scrollbar + cursor -->
<div class="a" style="left:114.500px;top:417.500px;width:5.500px;height:72px;background:#adadaf;border-radius:2.500px"></div>
<svg style="left:107.500px;top:413.500px" width="9" height="15" viewBox="0 0 9 15"><path d="M.8 .8v11.400l2.700-2.500 1.900 4.300 1.900-.8-1.900-4.200h3.400z" fill="#fff" stroke="#444" stroke-width=".9" stroke-linejoin="round"/></svg>
<svg style="left:48.500px;top:594px" width="11" height="11" viewBox="0 0 11 11"><path d="M5.500 0v11M0 5.500h11" stroke="#555" stroke-width="1.300"/></svg>
<!-- SLIDE -->
<div class="a" style="left:141.300px;top:207.800px;width:573.700px;height:322.900px;background:#1b1a1c;box-shadow:0 0 0 2.500px rgba(255,255,255,.3),0 2px 2px 0 rgba(40,40,45,.5)"></div>
<svg style="left:141.300px;top:207.800px;filter:none" width="573.700" height="322.900" viewBox="141.300 207.800 573.700 322.900">
  <defs>
    <linearGradient id="gBig" x1="0" y1="0" x2=".55" y2="1"><stop offset="0" stop-color="#fedb80"/><stop offset=".35" stop-color="#fcbc62"/><stop offset=".7" stop-color="#f79c4a"/><stop offset="1" stop-color="#f2873a"/></linearGradient>
    <linearGradient id="g1" x1=".2" y1="0" x2=".6" y2="1"><stop offset="0" stop-color="#f9a850"/><stop offset="1" stop-color="#f27a30"/></linearGradient>
    <linearGradient id="g2" x1=".2" y1="0" x2=".7" y2="1"><stop offset="0" stop-color="#f58c3e"/><stop offset="1" stop-color="#ec5a26"/></linearGradient>
    <linearGradient id="g3" x1=".1" y1="0" x2=".8" y2="1"><stop offset="0" stop-color="#f27a3a"/><stop offset=".6" stop-color="#ea4e22"/><stop offset="1" stop-color="#e22c16"/></linearGradient>
    <linearGradient id="gGrey" gradientUnits="userSpaceOnUse" x1="0" y1="376" x2="0" y2="531"><stop offset="0" stop-color="#fff" stop-opacity=".11"/><stop offset="1" stop-color="#fff" stop-opacity=".07"/></linearGradient>
    <clipPath id="slideclip"><rect x="141" y="207.500" width="575" height="324"/></clipPath>
  </defs>
  <g id="slideart" clip-path="url(#slideclip)">
    <rect x="141" y="207.500" width="575" height="324" fill="#1b1a1c"/>
    <!-- grey bands -->
    <g fill="url(#gGrey)">
      <polygon points="189.100,375.700 285.600,375.700 239.500,534 143,534"/>
      <polygon points="305.100,375.700 401.100,375.700 355,534 259,534"/>
      <polygon points="421.100,375.700 517.600,375.700 471.500,534 375,534"/>
      <polygon points="538.600,375.700 636.100,375.700 590,534 492.500,534"/>
    </g>
    <!-- dark backing behind orange blocks -->
    <polygon points="141,321 193,321 186.500,345.800 311,345.800 293,417 141,417" fill="#181718"/>
    <!-- accent line -->
    <rect x="141" y="415.800" width="534.800" height="2.600" fill="#d89a5c"/>
    <g fill="#fbbf74">
      <rect x="141" y="415.800" width="36" height="2.600"/>
      <rect x="273" y="415.800" width="20" height="2.600"/>
      <rect x="389" y="415.800" width="20" height="2.600"/>
      <rect x="505.500" y="415.800" width="21" height="2.600"/>
      <rect x="623.500" y="415.800" width="52.300" height="2.600"/>
    </g>
    <!-- big block -->
    <polygon points="141,321 191.300,321 167.400,417 141,417" fill="url(#gBig)"/>
    <polygon points="141,321 170,321 152,352 141,348" fill="#fee08c" fill-opacity=".4"/>
    <polygon points="170,321 191.300,321 183,354 160,360" fill="#fcc878" fill-opacity=".3"/>
    <polygon points="141,372 160,360 172,398 150,417 141,417" fill="#f7a356" fill-opacity=".3"/>
    <polygon points="150,417 172,398 167.400,417" fill="#ee8236" fill-opacity=".7"/>
    <!-- small blocks -->
    <polygon points="188.500,345.800 227.300,345.800 210.200,411.200 172.200,411.200" fill="url(#g1)"/>
    <polygon points="188.500,345.800 210,345.800 196,372 182,372" fill="#fbb862" fill-opacity=".3"/>
    <polygon points="196,372 221.500,368 210.200,411.200 190,411.200" fill="#ee6e2a" fill-opacity=".2"/>
    <polygon points="230.800,345.800 268.200,345.800 251.800,411.200 213.900,411.200" fill="url(#g2)"/>
    <polygon points="230.800,345.800 252,345.800 238,376 223.400,376" fill="#f8a04c" fill-opacity=".3"/>
    <polygon points="240,380 261.500,372 251.800,411.200 232,411.200" fill="#e84e20" fill-opacity=".25"/>
    <polygon points="272,345.800 309.300,345.800 293,411.200 255.700,411.200" fill="url(#g3)"/>
    <polygon points="272,345.800 294,345.800 280,374 265,374" fill="#f68a44" fill-opacity=".3"/>
    <polygon points="282,384 302.500,372 293,411.200 272,411.200" fill="#dc2412" fill-opacity=".4"/>
  </g>
</svg>
<!-- logo -->
<svg style="left:564px;top:255px" width="15" height="14" viewBox="0 0 15 14"><path d="M3.200 3.600C1.400 6 1 9.400 3.400 11.400c2.400 1.800 5.800.6 7.400-2.200l1.400-3.400 1.600.6L13.600.8 8 2.600l1.600.8-1.400 3.400C7.400 8.400 6 9 5 8.200 4 7.400 4.400 5.600 5.600 4z" fill="#f4a21c" stroke="#b8600a" stroke-width=".5"/></svg>
<div class="t" style="left:580px;top:253.500px;font-size:12.500px;line-height:15px;height:15px;font-weight:bold;font-style:italic;color:#f4f4f4;letter-spacing:-.3px;filter:blur(.4px)">uplooking</div>
<!-- title -->
<div class="t" style="left:347px;top:351px;font-size:21.600px;line-height:25px;height:25px;color:#f2753c;font-weight:500;filter:blur(.45px)">嵌入式物联网技术</div>
<div class="t" style="left:347px;top:374px;font-size:21.600px;line-height:25px;height:25px;color:#f2753c;font-weight:500;filter:blur(.45px)">让我们的生活变的智能化</div>
<!-- center scrollbar -->
<div class="a" style="left:732.500px;top:149px;width:10.800px;height:440px;background:#ececee"></div>
<div class="a" style="left:733px;top:403px;width:9px;height:32px;background:#fbfbfc;border:1px solid #c8c8cc;border-radius:4px"></div>
<div class="ar" style="left:735px;top:542px;border-top-color:#666"></div>
<svg style="left:734.500px;top:553px" width="6" height="6" viewBox="0 0 6 6"><path d="M.5 2.800L3 .5l2.500 2.300zM.5 5.800L3 3.500l2.500 2.300z" fill="#666"/></svg>
<svg style="left:734.500px;top:566.500px" width="6" height="6" viewBox="0 0 6 6"><path d="M.5 .2L3 2.500 5.500 .2zM.5 3.200L3 5.500l2.500-2.300z" fill="#666"/></svg>
<!-- RIGHT -->
<div class="ar" style="left:734.500px;top:159px;border-top:none;border-bottom:3px solid #666"></div>
<div class="t" style="left:751px;top:155.500px;font-size:9px;color:#444">对象属性</div>
<div class="ar" style="left:790px;top:160px;border-left-width:2px;border-right-width:2px;border-top-width:2.500px"></div>
<svg style="left:907.500px;top:154.500px" width="9" height="10" viewBox="0 0 9 10"><rect x=".5" y="4.300" width="8" height="5.200" rx=".8" fill="none" stroke="#8a8a8e" stroke-width="1"/><path d="M2.300 4.300V2.800a2.200 2.200 0 0 1 4.400 0v1.500" fill="none" stroke="#8a8a8e" stroke-width="1"/></svg>
<svg style="left:927px;top:156.500px" width="7" height="7" viewBox="0 0 7 7"><path d="M.3 .3l6.400 6.400M6.700 .3L.3 6.700" stroke="#777" stroke-width="1"/></svg>
<!-- bucket -->
<svg style="left:755px;top:173.500px" width="17" height="16" viewBox="0 0 17 16"><path d="M6.800 2.200l6.400 5.600-5.400 6H4.600L1 10.200z" fill="none" stroke="#444" stroke-width="1.100" stroke-linejoin="round"/><path d="M4.400 .6l3.600 3.200" stroke="#444" stroke-width="1.100"/><path d="M14.600 8.400c1 1.600 1.600 2.800 1.600 3.800a1.600 1.600 0 0 1-3.200 0c0-1 .6-2.200 1.600-3.800z" fill="#dfeaf8" stroke="#5a86c8" stroke-width=".9"/></svg>
<div class="t" style="left:754.500px;top:194.500px;font-size:9px;font-weight:bold;color:#c96a30">填充</div>
<div class="a" style="left:751px;top:209.500px;width:179px;height:1px;background:#dedee0"></div>
<div class="a" style="left:751px;top:208.800px;width:25px;height:1.600px;background:#e0824a"></div>
<!-- section header -->
<svg style="left:753px;top:230.500px" width="6" height="6" viewBox="0 0 6 6"><path d="M5.500 .5v5h-5z" fill="#d0703a"/></svg>
<div class="t" style="left:761.500px;top:227px;font-size:9px;font-weight:bold;color:#d67a3e">填充</div>
<div class="a" style="left:844px;top:224px;width:84px;height:18px;background:#fdfdfd;border:1px solid #d0d0d4;border-radius:2px"></div>
<div class="a" style="left:846.500px;top:226.500px;width:69px;height:13px;background:#121212"></div>
<div class="ar" style="left:919.500px;top:232px;border-left-width:2px;border-right-width:2px;border-top-width:2.500px;border-top-color:#555"></div>
<!-- radios -->
<div class="a rad" style="left:763px;top:254.500px"><i></i></div>
<div class="t opt" style="left:776.500px;top:253px">纯色填充(<u>S</u>)</div>
<div class="a rad" style="left:763px;top:273px"></div>
<div class="t opt" style="left:776.500px;top:271.500px">渐变填充(<u>G</u>)</div>
<div class="a rad" style="left:763px;top:291.500px"></div>
<div class="t opt" style="left:776.500px;top:290.500px">图片或纹理填充(<u>P</u>)</div>
<div class="a rad" style="left:763px;top:310.500px"></div>
<div class="t opt" style="left:776.500px;top:309.500px">图案填充(<u>A</u>)</div>
<div class="a" style="left:762.500px;top:330.500px;width:9.500px;height:9.500px;background:#fdfdfd;border:1px solid #a0a0a4;border-radius:1px"></div>
<div class="t opt" style="left:776.500px;top:329px">隐藏背景图形(<u>H</u>)</div>
<!-- color -->
<div class="t opt" style="left:762px;top:369.500px">颜色(C)</div>
<div class="a" style="left:845.500px;top:367px;width:82.500px;height:16px;background:#fdfdfd;border:1px solid #d0d0d4;border-radius:2px"></div>
<div class="a" style="left:848px;top:369.500px;width:68.500px;height:11px;background:#121212"></div>
<div class="ar" style="left:919.500px;top:374px;border-left-width:2px;border-right-width:2px;border-top-width:2.500px;border-top-color:#555"></div>
<!-- transparency -->
<div class="t opt" style="left:762px;top:397px">透明度(T)</div>
<div class="a" style="left:847.500px;top:398px;width:9px;height:9px;border:1px solid #8a8a8e;border-radius:50%;background:#fafafa"></div>
<div class="a" style="left:850px;top:402px;width:4px;height:1px;background:#666"></div>
<div class="t" style="left:859px;top:390.500px;font-size:8.500px;color:#555">0%</div>
<div class="a" style="left:858px;top:402px;width:54px;height:1px;background:#9a9a9e"></div>
<svg style="left:858px;top:402.500px" width="6" height="5" viewBox="0 0 6 5"><path d="M3 0l3 5H0z" fill="#e0783a"/></svg>
<div class="a" style="left:917px;top:398px;width:9px;height:9px;border:1px solid #8a8a8e;border-radius:50%;background:#fafafa"></div>
<div class="a" style="left:919.500px;top:402px;width:4px;height:1px;background:#666"></div>
<div class="a" style="left:921px;top:400.500px;width:1px;height:4px;background:#666"></div>
<!-- bottom buttons -->
<div class="a" style="left:751px;top:586px;width:44px;height:19.500px;background:#fcfcfc;border:1px solid #c4c4c8"></div>
<div class="t" style="left:755px;top:590px;font-size:9px;color:#333">全部应用</div>
<div class="a" style="left:800px;top:586px;width:44px;height:19.500px;background:#fcfcfc;border:1px solid #c4c4c8"></div>
<div class="t" style="left:804px;top:590px;font-size:9px;color:#333">重置背景</div>
<svg style="left:849px;top:592px" width="11" height="11" viewBox="0 0 11 11"><circle cx="5.500" cy="5.500" r="4.700" fill="#fbf3ee" stroke="#b8683a" stroke-width="1"/><path d="M4.300 3.300l3.200 2.200-3.200 2.200z" fill="none" stroke="#d0703a" stroke-width=".9" stroke-linejoin="round"/></svg>
<div class="t" style="left:864.500px;top:591.500px;font-size:9px;color:#4a86d0">操作技巧</div>
<!-- strip -->
<div class="a" style="left:952px;top:156.500px;width:11px;height:1px;background:#c8c8cc;box-shadow:0 4px 0 #c8c8cc"></div>
<div class="a" style="left:946px;top:170.500px;width:23.500px;height:23.500px;background:#bebec1;border-radius:2px"></div>
<svg style="left:951.500px;top:176.500px" width="13" height="12" viewBox="0 0 13 12"><path d="M0 2h13M0 6h13M0 10h13" stroke="#555" stroke-width="1"/><rect x="8" y=".4" width="2.600" height="3.200" fill="#bebec1" stroke="#555" stroke-width=".9"/><rect x="2.400" y="4.400" width="2.600" height="3.200" fill="#bebec1" stroke="#555" stroke-width=".9"/><rect x="6" y="8.400" width="2.600" height="3.200" fill="#bebec1" stroke="#555" stroke-width=".9"/></svg>
<div class="a" style="left:954px;top:308px;width:20px;height:50px;background:#5e5c5e;border-radius:4px 0 0 4px"></div>
<svg style="left:961px;top:327px" width="7" height="12" viewBox="0 0 7 12"><path d="M1 1l5 5-5 5" fill="none" stroke="#e8e8ea" stroke-width="1.400"/></svg>
<div class="a" style="left:943px;top:581px;width:33px;height:32px;background:#ebebec;border-top:1px solid #e2e2e4"></div>
<svg style="left:952.500px;top:594.500px" width="11" height="11" viewBox="0 0 11 11"><g fill="none" stroke="#555" stroke-width="1"><rect x=".5" y=".5" width="3.800" height="3.800"/><rect x="6.700" y=".5" width="3.800" height="3.800"/><rect x=".5" y="6.700" width="3.800" height="3.800"/><rect x="6.700" y="6.700" width="3.800" height="3.800"/></g></svg>
<!-- BOTTOM -->
<svg style="left:131.500px;top:595.500px" width="11" height="11" viewBox="0 0 11 11"><path d="M.6 .6h9.800v7.400H3.400L.6 10.400z" fill="none" stroke="#555" stroke-width="1" stroke-linejoin="round"/><path d="M3 3.200h5M3 5.400h5" stroke="#555" stroke-width=".9"/></svg>
<div class="t" style="left:149.500px;top:595.500px;font-size:10px;color:#444">单击此处添加备注</div>
<div class="a" id="sbar" style="left:0;top:613px;width:976px;height:12px;overflow:hidden">
  <div class="t" style="left:-4px;top:8.500px;font-size:9px;color:#333">幻灯片 22 / 44</div>
  <div class="t" style="left:70px;top:8.500px;font-size:9px;color:#333">Office 主题</div>
  <div class="t" style="left:113px;top:8.500px;font-size:9px;color:#333">↓更</div>
  <div class="t" style="left:151px;top:8.500px;font-size:9px;color:#333">凹 缺失字体</div>
  <div class="a" style="left:216px;top:2px;width:1px;height:10px;background:#dcdcde"></div>
  <div class="a" style="left:629px;top:8.500px;width:11px;height:1.200px;background:#666"></div>
  <div class="a" style="left:652.500px;top:5px;width:17.500px;height:8px;background:#c6c6c8;border-radius:1.500px 1.500px 0 0"></div>
  <div class="a" style="left:656px;top:7.500px;width:10.500px;height:8px;border:1.200px solid #444"></div>
  <div class="a" style="left:675px;top:8px;width:4.500px;height:6px;border:1px solid #444"></div>
  <div class="a" style="left:682px;top:8px;width:4.500px;height:6px;border:1px solid #444"></div>
  <div class="a" style="left:695px;top:8px;width:5.500px;height:6px;border:1px solid #444"></div>
  <div class="a" style="left:700.500px;top:8px;width:5.500px;height:6px;border:1px solid #444"></div>
  <div class="a" style="left:722.500px;top:5px;width:22.500px;height:9px;background:#ee7752;border-radius:2.500px 2.500px 0 0"></div>
  <svg style="left:731px;top:8.500px;filter:none" width="6" height="6" viewBox="0 0 6 6"><path d="M.5 0l5 3.500L.5 7z" fill="#fff"/></svg>
  <div class="t" style="left:769px;top:8.500px;font-size:9px;color:#444">60%</div>
  <div class="a" style="left:844px;top:9px;width:8px;height:8px;border:1px solid #666;border-radius:50%"></div>
  <div class="a" style="left:937.500px;top:8.500px;width:1.200px;height:6px;background:#555"></div>
  <div class="a" style="left:953px;top:10px;width:3px;height:4px;border:1px solid #555;border-right:none;border-bottom:none"></div>
  <div class="a" style="left:960px;top:10px;width:3px;height:4px;border:1px solid #555;border-left:none;border-bottom:none"></div>
</div>
<div class="a" style="left:733.500px;top:583px;width:9.500px;height:7px;background:#dadadc"></div>
<div class="a" style="left:974px;top:0;width:2px;height:630px;background:#0a0a0a"></div>
</body>
</html>
